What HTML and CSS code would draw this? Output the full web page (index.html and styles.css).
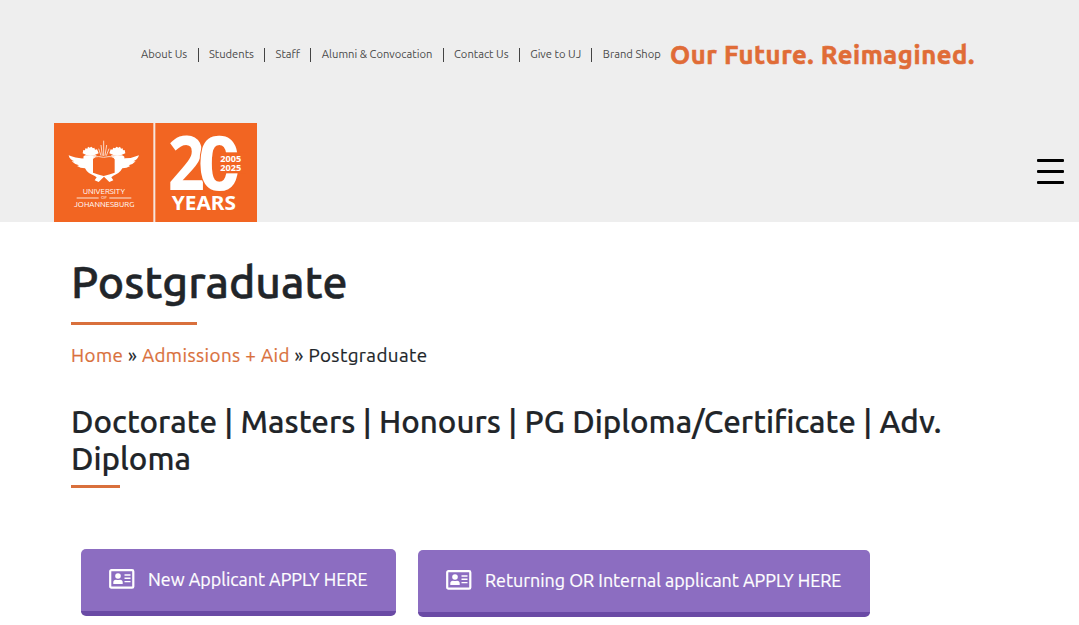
FILE: index.html
```html
<!DOCTYPE html>
<html lang="en">
<head>
    <meta charset="UTF-8">
    <meta name="viewport" content="width=device-width, initial-scale=1.0">
    <title>Postgraduate - University of Johannesburg</title>
    <link rel="stylesheet" href="styles.css">
</head>
<body>
    <header class="site-header">
        <div class="top-bar">
            <ul class="top-menu">
                <li><a href="#">About Us</a></li>
                <li><a href="#">Students</a></li>
                <li><a href="#">Staff</a></li>
                <li><a href="#">Alumni &amp; Convocation</a></li>
                <li><a href="#">Contact Us</a></li>
                <li><a href="#">Give to UJ</a></li>
                <li><a href="#">Brand Shop</a></li>
            </ul>
            <div class="tagline">Our Future. Reimagined.</div>
        </div>
        <div class="nav-bar">
            <a href="#" class="logo" aria-label="University of Johannesburg">
                <svg width="203" height="99" viewBox="12 15 609 297">
                    <rect x="12" y="15" width="609" height="297" fill="#f26522"/>
                    <rect x="310" y="15" width="6" height="297" fill="#f7e4dc"/>
                    <!-- hoopoes and book -->
                    <g fill="#fff">
                        <path d="M56 112C72 119 88 122 102 121Q96 116 106 112L140 112Q137 119 129 124V164Q144 170 161 174Q178 170 194 164V124Q185 119 183 112L216 112Q227 117 222 121Q244 122 267 112Q263 125 250 130L257 130Q247 141 236 142L241 144Q230 151 217 151Q208 167 190 173L184 178L190 187L178 192L162 176L146 192L134 187L140 178L133 173Q113 167 105 151Q91 151 81 144L87 142Q74 139 65 130L73 130Q58 124 56 112Z"/>
                        <path d="M98 106L100 96L105 97L106 91L112 92L114 86L119 89L124 86L129 91L133 89L135 95L141 94L146 106Q134 113 121 113Q108 113 98 106Z"/>
                        <path d="M178 106L182 94L187 95L190 89L195 91L200 86L205 89L210 86L213 92L218 91L219 97L224 96L226 106Q214 113 202 113Q190 113 178 106Z"/>
                    </g>
                    <path d="M131 121Q147 118 161 122Q176 118 192 121V165Q176 163 161 168Q147 163 131 165Z" fill="#f26522"/>
                    <path d="M130 117Q146 114 161 118Q177 114 193 117M161 114V68M157 113L153 81M165 113L170 81M153 113L146 92M169 113L177 92" stroke="#fbd6c4" stroke-width="3" fill="none"/>
                    <g fill="#fff">
                        <text x="98" y="227" font-size="22" textLength="127" lengthAdjust="spacingAndGlyphs">UNIVERSITY</text>
                        <text x="153" y="244" font-size="11" textLength="18" lengthAdjust="spacingAndGlyphs">OF</text>
                        <text x="72" y="268" font-size="22" textLength="181" lengthAdjust="spacingAndGlyphs">JOHANNESBURG</text>
                    </g>
                    <path d="M80 240H146M178 240H244" stroke="#fff" stroke-width="2.5"/>
                    <!-- 20 years -->
                    <g class="logo-bold" fill="#fff">
                        <text x="353" y="215" font-size="228" textLength="112" lengthAdjust="spacingAndGlyphs">2</text>
                        <text class="logo-zero" x="443" y="215" font-size="228" textLength="130" lengthAdjust="spacingAndGlyphs">0</text>
                        <rect x="508" y="103" width="80" height="63" fill="#f26522"/>
                        <text x="511" y="131" font-size="25" textLength="63" lengthAdjust="spacingAndGlyphs">2005</text>
                        <text x="511" y="158" font-size="25" textLength="63" lengthAdjust="spacingAndGlyphs">2025</text>
                        <text x="365" y="275" font-size="57" textLength="193" lengthAdjust="spacingAndGlyphs">YEARS</text>
                    </g>
                </svg>
            </a>
            <button class="menu-toggle" aria-label="Menu">
                <span></span>
                <span></span>
                <span></span>
            </button>
        </div>
    </header>

    <main class="content">
        <h1>Postgraduate</h1>
        <nav class="breadcrumb">
            <a href="#">Home</a> » <a href="#">Admissions + Aid</a> » <span>Postgraduate</span>
        </nav>
        <h2>Doctorate | Masters | Honours | PG Diploma/Certificate | Adv. Diploma</h2>
        <div class="buttons">
            <a href="#" class="btn btn-new">
                <svg class="btn-icon" width="26" height="20" viewBox="0 0 26 20">
                    <rect x="1.2" y="1.2" width="23.1" height="17.4" rx="1.2" fill="none" stroke="currentColor" stroke-width="2.2"/>
                    <circle cx="9" cy="7" r="2.8" fill="currentColor"/>
                    <path d="M4.3 15V13.2Q4.3 10.7 7 10.7Q9 11.5 11 10.7Q13.7 10.7 13.7 13.2V15Z" fill="currentColor"/>
                    <path d="M15.5 6H21.5M15.5 9.3H21.5M15.5 12.6H21.5" stroke="currentColor" stroke-width="1.4"/>
                </svg>
                <span>New Applicant APPLY HERE</span>
            </a>
            <a href="#" class="btn btn-returning">
                <svg class="btn-icon" width="26" height="20" viewBox="0 0 26 20">
                    <rect x="1.2" y="1.2" width="23.1" height="17.4" rx="1.2" fill="none" stroke="currentColor" stroke-width="2.2"/>
                    <circle cx="9" cy="7" r="2.8" fill="currentColor"/>
                    <path d="M4.3 15V13.2Q4.3 10.7 7 10.7Q9 11.5 11 10.7Q13.7 10.7 13.7 13.2V15Z" fill="currentColor"/>
                    <path d="M15.5 6H21.5M15.5 9.3H21.5M15.5 12.6H21.5" stroke="currentColor" stroke-width="1.4"/>
                </svg>
                <span>Returning OR Internal applicant APPLY HERE</span>
            </a>
        </div>
    </main>
</body>
</html>
```
FILE: styles.css
```css
* {
    box-sizing: border-box;
}

body {
    margin: 0;
    font-family: Ubuntu, "Noto Sans", sans-serif;
    color: #212529;
    background-color: #fff;
    overflow: hidden;
}

a {
    color: #d9703c;
    text-decoration: none;
}

.site-header {
    height: 222px;
    background-color: #eee;
}

.top-bar {
    display: flex;
    align-items: center;
    height: 109px;
    padding-left: 141px;
}

.top-menu {
    display: flex;
    align-items: center;
    width: 529px;
    margin: 0;
    padding: 0 0 1px;
    list-style: none;
}

.top-menu li {
    display: flex;
    align-items: center;
    font-size: 11.2px;
    line-height: 14px;
    white-space: nowrap;
}

.top-menu li + li::before {
    content: "";
    width: 1px;
    height: 14px;
    margin: 1px 10.4px 0 10.3px;
    background-color: #444;
}

.top-menu a {
    color: #4a4a4a;
}

.tagline {
    font-size: 25.6px;
    font-weight: 700;
    letter-spacing: 0.57px;
    color: #e06c37;
    -webkit-text-stroke: 0.6px #e06c37;
    white-space: nowrap;
}

.nav-bar {
    display: flex;
    justify-content: space-between;
    height: 113px;
    padding: 14px 15px 0 54px;
}

.logo svg {
    display: block;
}

.logo-bold {
    font-family: "Noto Sans", sans-serif;
    font-weight: 700;
}

.logo-zero {
    stroke: #f26522;
    stroke-width: 6px;
    paint-order: stroke;
}

.menu-toggle {
    display: flex;
    flex-direction: column;
    gap: 8px;
    width: 27px;
    height: 27px;
    margin-top: 36px;
    padding: 0;
    border: none;
    background: none;
}

.menu-toggle span {
    height: 3px;
    border-radius: 1px;
    background-color: #000;
}

.content {
    padding: 31px 71px 0;
}

h1 {
    margin: 0;
    font-size: 44.6px;
    font-weight: 500;
    line-height: 56px;
    -webkit-text-stroke: 0.5px #212529;
}

h1::after,
h2::after {
    content: "";
    display: block;
    height: 3px;
    background-color: #d9703c;
}

h1::after {
    width: 126px;
    margin-top: 13px;
}

.breadcrumb {
    margin-top: 17px;
    font-size: 18.8px;
    letter-spacing: 0.4px;
    line-height: 26px;
    -webkit-text-stroke: 0.2px;
}

h2 {
    margin: 35px 0 0;
    font-size: 31.35px;
    font-weight: 500;
    line-height: 37px;
    -webkit-text-stroke: 0.2px #212529;
}

h2::after {
    width: 49px;
    margin-top: 8px;
}

.buttons {
    display: flex;
    align-items: flex-start;
    gap: 22px;
    margin: 61px 0 0 10px;
}

.btn {
    display: flex;
    align-items: center;
    gap: 13px;
    height: 67px;
    padding: 0 0 2px 28px;
    border-bottom: 5px solid #6a4aa5;
    border-radius: 5px;
    background-color: #8c6dc1;
    color: #fff;
    font-size: 17.9px;
    -webkit-text-stroke: 0.2px #fff;
    white-space: nowrap;
}

.btn-icon {
    flex: none;
}

.btn-new {
    width: 315px;
}

.btn-returning {
    width: 452px;
    margin-top: 1px;
}
```
